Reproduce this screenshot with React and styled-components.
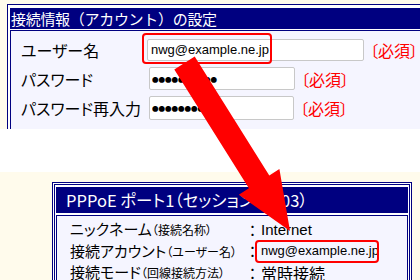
import React from 'react';
import styled, { createGlobalStyle } from 'styled-components';

const navy = '#000080';
const cream = '#fffbec';
const lavender = '#f5f5ff';
const red = '#ff0000';
const jp = `"Noto Sans CJK JP", "Liberation Sans", sans-serif`;
const latin = `"Liberation Sans", "Noto Sans CJK JP", sans-serif`;

const GlobalStyle = createGlobalStyle`
    html, body {
        margin: 0;
        padding: 0;
        background: #ffffff;
    }
`;

const Stage = styled.div`
    position: relative;
    width: 420px;
    height: 280px;
    overflow: hidden;
    font-family: ${jp};
    font-feature-settings: "palt";
    color: #000;
`;

const Shot = styled.div`
    height: ${props => props.h}px;
    background: ${cream};
    overflow: hidden;
    box-sizing: border-box;
    padding: ${props => props.pad};
`;

const Gap = styled.div`
    height: 43px;
    background: #ffffff;
`;

/* ---- top screenshot: account settings form ---- */

const SettingsPanel = styled.div`
    background: #ffffff;
    border-top: 1px solid ${navy};
    border-left: 1px solid ${navy};
    padding: 3px 0 0 2px;
    height: 240px;
`;

const SettingsTitle = styled.div`
    background: ${navy};
    color: #ffffff;
    height: 21px;
    line-height: 21px;
    font-size: 15px;
    letter-spacing: -0.3px;
    font-feature-settings: normal;
    padding-left: 1px;
    white-space: nowrap;
`;

const FormTable = styled.div`
    margin-top: 1px;
    border-top: 1px solid ${navy};
    border-left: 1px solid ${navy};
    background: ${lavender};
    padding: 4px 0 0 10px;
    display: flex;
    flex-direction: column;
    height: 200px;
`;

const FormRow = styled.div`
    display: flex;
    align-items: center;
    height: 29px;
`;

const FieldLabel = styled.div`
    width: ${props => props.w}px;
    flex-shrink: 0;
    font-size: 16px;
    white-space: nowrap;
`;

const FieldWrap = styled.span`
    position: relative;
    display: inline-flex;
    flex-shrink: 0;
`;

const TextBox = styled.input`
    width: ${props => props.w}px;
    height: ${props => props.h || 22}px;
    flex-shrink: 0;
    box-sizing: border-box;
    border: 1px solid #c8c8c8;
    border-radius: 2px;
    background: #ffffff;
    font-family: ${latin};
    font-size: 13px;
    color: #000;
    padding: 0 3px;
    margin: 0;
    outline: none;
`;

const PasswordBox = styled(TextBox)`
    font-family: "Noto Sans CJK JP", sans-serif;
    font-size: 6.5px;
    padding: 0 2px;
`;

const Required = styled.span`
    color: ${red};
    font-size: 16px;
    margin-left: 6px;
    white-space: nowrap;
    flex-shrink: 0;
`;

const Highlight = styled.span`
    position: absolute;
    left: ${props => props.x}px;
    top: ${props => props.y}px;
    width: ${props => props.w}px;
    height: ${props => props.h}px;
    box-sizing: border-box;
    border: 2px solid ${red};
    border-radius: 4px;
    pointer-events: none;
`;

/* ---- bottom screenshot: PPPoE status ---- */

const StatusPanel = styled.div`
    width: 360px;
    box-sizing: border-box;
    border: 1px solid ${navy};
    padding: 1px;
    background: #ffffff;
`;

const StatusInner = styled.div`
    border: 1px solid ${navy};
    padding: 2px 1px 0 1px;
    background: #ffffff;
`;

const StatusTitle = styled.div`
    background: ${navy};
    color: #ffffff;
    height: 26px;
    line-height: 26px;
    font-size: 16.5px;
    padding-left: 10px;
    white-space: nowrap;
`;

const StatusBody = styled.div`
    margin-top: 2px;
    border: 1px solid ${navy};
    background: ${lavender};
    padding: 3px 0 0 13px;
    display: grid;
    grid-template-columns: 174px 17px auto;
    grid-auto-rows: 21.5px;
    align-items: center;
    align-content: start;
    height: 120px;
    line-height: 20px;
`;

const StatusLabel = styled.div`
    font-size: 15px;
    white-space: nowrap;
    small {
        font-size: 12px;
    }
`;

const Colon = styled.div`
    font-size: 15px;
    text-align: center;
`;

const StatusValue = styled.div`
    font-family: ${props => props.latin ? latin : jp};
    font-size: ${props => props.size || 16}px;
    white-space: nowrap;
`;

const ValueMark = styled.span`
    position: relative;
    display: inline-block;
`;

const ArrowLayer = styled.svg`
    position: absolute;
    left: 0;
    top: 0;
    pointer-events: none;
`;

// big red arrow from the user name field down to the account value
const arrowPoints = [
    [174.3, 69.4],
    [248.9, 188.3],
    [238.8, 194.7],
    [290, 231],
    [279.4, 169.1],
    [269.3, 175.5],
    [194.7, 56.6],
];

const statusRows = [
    { label: 'ニックネーム', note: '（接続名称）', value: 'Internet', latin: true, size: 15 },
    { label: '接続アカウント', note: '（ユーザー名）', value: 'nwg@example.ne.jp', latin: true, size: 13, marked: true },
    { label: '接続モード', note: '（回線接続方法）', value: '常時接続', size: 16 },
];

const App = () => {
    return (
        <Stage>
            <GlobalStyle />
            <Shot h={129} pad="4px 0 0 7px">
                <SettingsPanel>
                    <SettingsTitle>接続情報（アカウント）の設定</SettingsTitle>
                    <FormTable>
                        <FormRow>
                            <FieldLabel w={126}>ユーザー名</FieldLabel>
                            <FieldWrap>
                                <TextBox w={217} defaultValue="nwg@example.ne.jp" readOnly />
                                <Highlight x={-5} y={-6} w={130} h={31} />
                            </FieldWrap>
                            <Required>〔必須〕</Required>
                        </FormRow>
                        <FormRow>
                            <FieldLabel w={128}>パスワード</FieldLabel>
                            <PasswordBox w={146} h={23} defaultValue="●●●●●●●●●●" readOnly aria-label="パスワード" />
                            <Required>〔必須〕</Required>
                        </FormRow>
                        <FormRow>
                            <FieldLabel w={128}>パスワード再入力</FieldLabel>
                            <PasswordBox w={145} h={24} defaultValue="●●●●●●●●●●" readOnly aria-label="パスワード再入力" />
                            <Required>〔必須〕</Required>
                        </FormRow>
                    </FormTable>
                </SettingsPanel>
            </Shot>
            <Gap />
            <Shot h={108} pad="10px 0 0 52px">
                <StatusPanel>
                    <StatusInner>
                        <StatusTitle>PPPoE ポート1（セッション：SS03）</StatusTitle>
                        <StatusBody>
                            {statusRows.map(row => (
                                <React.Fragment key={row.label}>
                                    <StatusLabel>{row.label}<small>{row.note}</small></StatusLabel>
                                    <Colon>：</Colon>
                                    <StatusValue latin={row.latin} size={row.size}>
                                        <ValueMark>
                                            {row.value}
                                            {row.marked && <Highlight x={-6} y={-1} w={124} h={23} />}
                                        </ValueMark>
                                    </StatusValue>
                                </React.Fragment>
                            ))}
                        </StatusBody>
                    </StatusInner>
                </StatusPanel>
            </Shot>
            <ArrowLayer width="420" height="280" viewBox="0 0 420 280">
                <polygon points={arrowPoints.map(p => p.join(',')).join(' ')} fill={red} />
            </ArrowLayer>
        </Stage>
    );
};

export default App;
